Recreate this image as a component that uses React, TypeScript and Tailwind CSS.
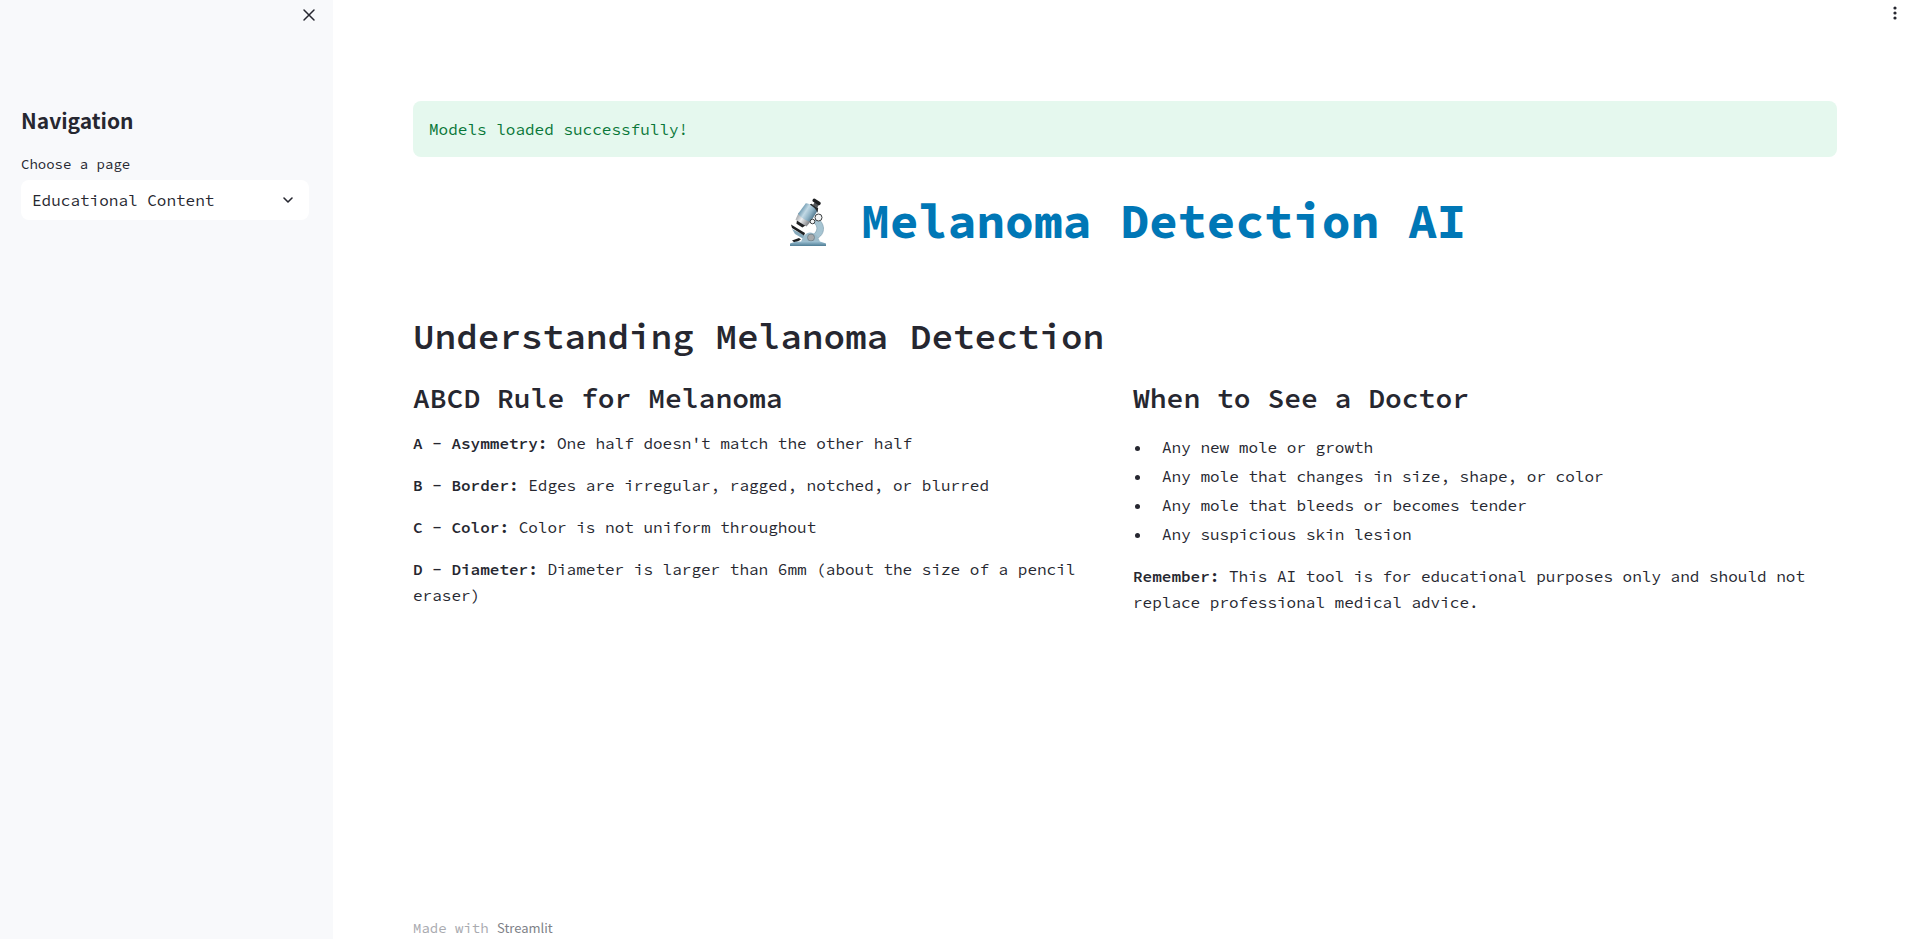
import type { ReactNode } from "react";

const rules = [
  { name: "A - Asymmetry:", text: "One half doesn't match the other half" },
  { name: "B - Border:", text: "Edges are irregular, ragged, notched, or blurred" },
  { name: "C - Color:", text: "Color is not uniform throughout" },
  { name: "D - Diameter:", text: "Diameter is larger than 6mm (about the size of a pencil eraser)" },
];

const signs = [
  "Any new mole or growth",
  "Any mole that changes in size, shape, or color",
  "Any mole that bleeds or becomes tender",
  "Any suspicious skin lesion",
];

function Microscope() {
  return (
    <svg viewBox="-2 0 48 56" className="h-14 w-12 shrink-0" role="img" aria-label="Microscope">
      <defs>
        <linearGradient id="tube" x1="0" y1="0" x2="1" y2="0">
          <stop offset="0" stopColor="#6f9ab1" />
          <stop offset="0.35" stopColor="#c2d9e5" />
          <stop offset="0.7" stopColor="#8db1c4" />
          <stop offset="1" stopColor="#557c92" />
        </linearGradient>
        <linearGradient id="steel" x1="0" y1="0" x2="1" y2="0">
          <stop offset="0" stopColor="#a3a6aa" />
          <stop offset="0.4" stopColor="#eceef0" />
          <stop offset="1" stopColor="#77797d" />
        </linearGradient>
        <linearGradient id="base" x1="0" y1="0" x2="0" y2="1">
          <stop offset="0" stopColor="#9cc0d2" />
          <stop offset="1" stopColor="#4f7d95" />
        </linearGradient>
      </defs>
      <path d="M31 25 C39 30 40 40 32 45 L27 42 C32 38 32 33 28 30Z" fill="#a6c4d2" stroke="#7395a6" strokeWidth="0.6" />
      <path d="M6 36 L18 42 L21 48 L9 41Z" fill="#86a9bb" />
      <path d="M5 31.500 L19 40 L18 42.500 L6 35Z" fill="#1d1f21" />
      <path d="M6 47.500 L13 45 L15 46.500 L9 50Z" fill="#1d1f21" />
      <path d="M15 49 C17 43 20 39.500 24 39.500 C29 39.500 32 43 34 49Z" fill="#9dbccb" />
      <circle cx="25" cy="44.500" r="3.500" fill="#a7a9ab" stroke="#6d7f89" strokeWidth="0.8" />
      <path d="M4 50.500 L10 48.500 H34 L40 50.500 V53 H4Z" fill="url(#base)" />
      <g transform="translate(21 21.500) rotate(32)">
        <path d="M-6 9 H5 L3 13.500 H-4Z" fill="#202224" />
        <path d="M-8 3 H7 L6 10.500 H-7Z" fill="url(#steel)" />
        <path d="M-7 -9 C-4 -11 4 -11 7 -9 V4 C3 6 -4 6 -8 4Z" fill="url(#tube)" />
        <path d="M-2 -11.500 H6 L8 -7 C5 -9.500 1 -10 -3 -10Z" fill="#26292b" />
        <path d="M0 -15.500 H5 V-11 H0Z" fill="#54585b" />
        <rect x="-3" y="-17.500" width="9" height="3.500" rx="1.500" fill="#1d1f21" />
      </g>
      <circle cx="32.500" cy="24.500" r="3.500" fill="#f4f6f7" stroke="#3b3e40" strokeWidth="1" />
      <circle cx="26.500" cy="28.500" r="2.300" fill="#f4f6f7" stroke="#3b3e40" strokeWidth="1" />
    </svg>
  );
}

function SectionTitle({ children }: { children: ReactNode }) {
  return <h3 className="text-[28px] leading-[34px] font-semibold">{children}</h3>;
}

function Sidebar() {
  return (
    <aside className="w-[333px] shrink-0 bg-[#f8f9fb]">
      <div className="flex h-[99px] items-start justify-end pt-[7px] pr-4">
        <button type="button" aria-label="Close sidebar" className="flex size-4 items-center justify-center">
          <svg viewBox="0 0 16 16" className="size-4" fill="none" stroke="currentColor" strokeWidth="1.5" strokeLinecap="round">
            <path d="M3 3 13 13M13 3 3 13" />
          </svg>
        </button>
      </div>
      <div className="flex flex-col pr-6 pl-[21px]">
        <h2 className="font-['Source_Sans_Pro','Noto_Sans_CJK_JP',sans-serif] text-[21px] leading-[42px] font-semibold">
          Navigation
        </h2>
        <label htmlFor="page" className="mt-[11px] text-sm leading-6">
          Choose a page
        </label>
        <div className="mt-1 grid">
          <select
            id="page"
            className="col-start-1 row-start-1 h-10 w-full appearance-none rounded-lg bg-white pr-10 pl-[11px] text-base"
          >
            <option>Educational Content</option>
          </select>
          <svg
            viewBox="0 0 16 16"
            className="pointer-events-none col-start-1 row-start-1 mr-[13px] size-4 self-center justify-self-end"
            fill="none"
            stroke="currentColor"
            strokeWidth="1.6"
            strokeLinecap="round"
            strokeLinejoin="round"
          >
            <path d="M4 6 8 10 12 6" />
          </svg>
        </div>
      </div>
    </aside>
  );
}

export default function App() {
  return (
    <div className="flex min-h-screen bg-white font-['Source_Code_Pro','Liberation_Mono',monospace] text-base leading-[26px] text-[#262730]">
      <Sidebar />
      <div className="flex min-w-0 flex-1 flex-col">
        <header className="flex h-[101px] items-start justify-end pt-[5px] pr-2.5">
          <button type="button" aria-label="Main menu" className="size-4">
            <svg viewBox="0 0 16 16" className="size-4" fill="currentColor">
              <circle cx="8" cy="3" r="1.600" />
              <circle cx="8" cy="8" r="1.600" />
              <circle cx="8" cy="13" r="1.600" />
            </svg>
          </button>
        </header>
        <main className="flex flex-col pr-[76px] pl-20">
          <div role="alert" className="rounded-lg bg-[#e5f8ee] px-4 py-[15px] text-[#087738]">
            Models loaded successfully!
          </div>
          <h1 className="mt-[35px] flex items-center justify-center text-5xl leading-[58px] font-bold whitespace-pre text-[#0077b6]">
            <Microscope />
            <span> Melanoma Detection AI</span>
          </h1>
          <h2 className="mt-[65px] text-4xl leading-[44px] font-semibold">Understanding Melanoma Detection</h2>
          <div className="mt-[22px] grid grid-cols-2 gap-4">
            <section>
              <SectionTitle>ABCD Rule for Melanoma</SectionTitle>
              <div className="mt-[15px] flex flex-col gap-4">
                {rules.map((rule) => (
                  <p key={rule.name}>
                    <strong className="font-semibold">{rule.name}</strong> {rule.text}
                  </p>
                ))}
              </div>
            </section>
            <section>
              <SectionTitle>When to See a Doctor</SectionTitle>
              <ul className="mt-[18px] list-disc">
                {signs.map((sign) => (
                  <li key={sign} className="ml-[19px] pl-2.5 leading-[29px]">
                    {sign}
                  </li>
                ))}
              </ul>
              <p className="mt-3.5">
                <strong className="font-semibold">Remember:</strong> This AI tool is for educational purposes only and
                should not replace professional medical advice.
              </p>
            </section>
          </div>
        </main>
        <footer className="mt-auto pl-20 text-sm leading-[22px] text-[#a9aaaf]">
          Made with{" "}
          <a
            href="https://streamlit.io"
            className="font-['Source_Sans_Pro','Noto_Sans_CJK_JP',sans-serif] text-[13px] text-[#808288]"
          >
            Streamlit
          </a>
        </footer>
      </div>
    </div>
  );
}
